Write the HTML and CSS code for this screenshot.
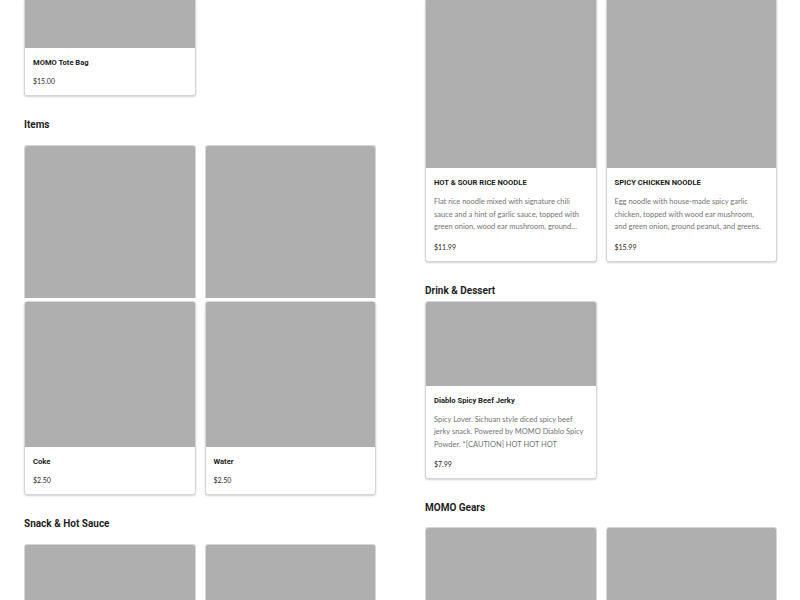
FILE: index.html
```html
<!DOCTYPE html>
<html lang="en">
<head>
<meta charset="UTF-8" />
<meta name="viewport" content="width=device-width, initial-scale=1" />
<title>MOMO Menu</title>
<link rel="stylesheet" href="styles.css">
</head>
<body>

<div class="menu">

  <!-- left column -->
  <div class="col">
    <div class="grid">
      <div class="card cut-top">
        <div class="photo" style="height: 48px;"></div>
        <div class="info">
          <h3>MOMO Tote Bag</h3>
          <p class="price">$15.00</p>
        </div>
      </div>
    </div>

    <h2 class="section">Items</h2>
    <div class="grid rows-tight">
      <div class="card only-photo"><div class="photo" style="height: 152px;"></div></div>
      <div class="card only-photo"><div class="photo" style="height: 152px;"></div></div>
      <div class="card">
        <div class="photo" style="height: 145px;"></div>
        <div class="info">
          <h3>Coke</h3>
          <p class="price">$2.50</p>
        </div>
      </div>
      <div class="card">
        <div class="photo" style="height: 145px;"></div>
        <div class="info">
          <h3>Water</h3>
          <p class="price">$2.50</p>
        </div>
      </div>
    </div>

    <h2 class="section">Snack &amp; Hot Sauce</h2>
    <div class="grid">
      <div class="card only-photo"><div class="photo" style="height: 80px;"></div></div>
      <div class="card only-photo"><div class="photo" style="height: 80px;"></div></div>
    </div>
  </div>

  <!-- right column -->
  <div class="col">
    <div class="grid">
      <div class="card cut-top">
        <div class="photo" style="height: 168px;"></div>
        <div class="info">
          <h3>HOT &amp; SOUR RICE NOODLE</h3>
          <p class="desc">Flat rice noodle mixed with signature chili sauce and a hint of garlic sauce, topped with green onion, wood ear mushroom, ground…</p>
          <p class="price">$11.99</p>
        </div>
      </div>
      <div class="card cut-top">
        <div class="photo" style="height: 168px;"></div>
        <div class="info">
          <h3>SPICY CHICKEN NOODLE</h3>
          <p class="desc">Egg noodle with house-made spicy garlic chicken, topped with wood ear mushroom,<br>and green onion, ground peanut, and greens.</p>
          <p class="price">$15.99</p>
        </div>
      </div>
    </div>

    <h2 class="section close">Drink &amp; Dessert</h2>
    <div class="grid">
      <div class="card">
        <div class="photo" style="height: 84px;"></div>
        <div class="info">
          <h3>Diablo Spicy Beef Jerky</h3>
          <p class="desc">Spicy Lover. Sichuan style diced spicy beef jerky snack. Powered by MOMO Diablo Spicy Powder. *[CAUTION] HOT HOT HOT</p>
          <p class="price">$7.99</p>
        </div>
      </div>
    </div>

    <h2 class="section tight">MOMO Gears</h2>
    <div class="grid">
      <div class="card only-photo"><div class="photo" style="height: 80px;"></div></div>
      <div class="card only-photo"><div class="photo" style="height: 80px;"></div></div>
    </div>
  </div>

</div>

</body>
</html>
```

FILE: styles.css
```css
/* --- Reset & basics --- */
* {
  margin: 0; padding: 0; box-sizing: border-box;
}
html, body {
  height: 100%;
  overflow: hidden;
  background: #fff;
  font-family: Roboto, "Liberation Sans", sans-serif;
  color: #1f1f1f;
}

/* --- Two menu columns --- */
.menu {
  display: grid;
  grid-template-columns: 1fr 1fr;
  column-gap: 49px;
  padding: 0 23px 0 24px;
  align-items: start;
}

/* --- Section headings --- */
.section {
  font-size: 10px;
  font-weight: 700;
  line-height: 14px;
  margin: 22px 0 13px;
}
.section.close {
  margin: 22px 0 3px;
}
.section.tight {
  margin-bottom: 12px;
}

/* --- Product cards --- */
.grid {
  display: grid;
  grid-template-columns: 1fr 1fr;
  column-gap: 9px;
  row-gap: 9px;
  align-items: start;
}
.grid.rows-tight {
  row-gap: 3px;
}

.card {
  background: #fff;
  border: 1px solid #d6d6d6;
  border-radius: 3px;
  box-shadow: 0 1px 2px rgba(0,0,0,0.18);
  overflow: hidden;
}
.card.cut-top {
  border-top: none;
  border-top-left-radius: 0;
  border-top-right-radius: 0;
}
.card.only-photo {
  border-bottom: none;
  border-bottom-left-radius: 0;
  border-bottom-right-radius: 0;
  box-shadow: none;
}

.photo {
  background: #afafaf;
}

.info {
  padding: 10px 12px 9px 8px;
}
.info h3 {
  font-size: 7.6px;
  font-weight: 700;
  line-height: 10px;
  color: #1c1c1c;
  margin-bottom: 8px;
}
.info .desc {
  font-family: Lato, "Open Sans", sans-serif;
  font-size: 7.5px;
  line-height: 12.5px;
  color: #747474;
  margin-bottom: 8px;
}
.info .price {
  font-family: Lato, "Open Sans", sans-serif;
  font-size: 7px;
  line-height: 10px;
  color: #2a2a2a;
}
```
